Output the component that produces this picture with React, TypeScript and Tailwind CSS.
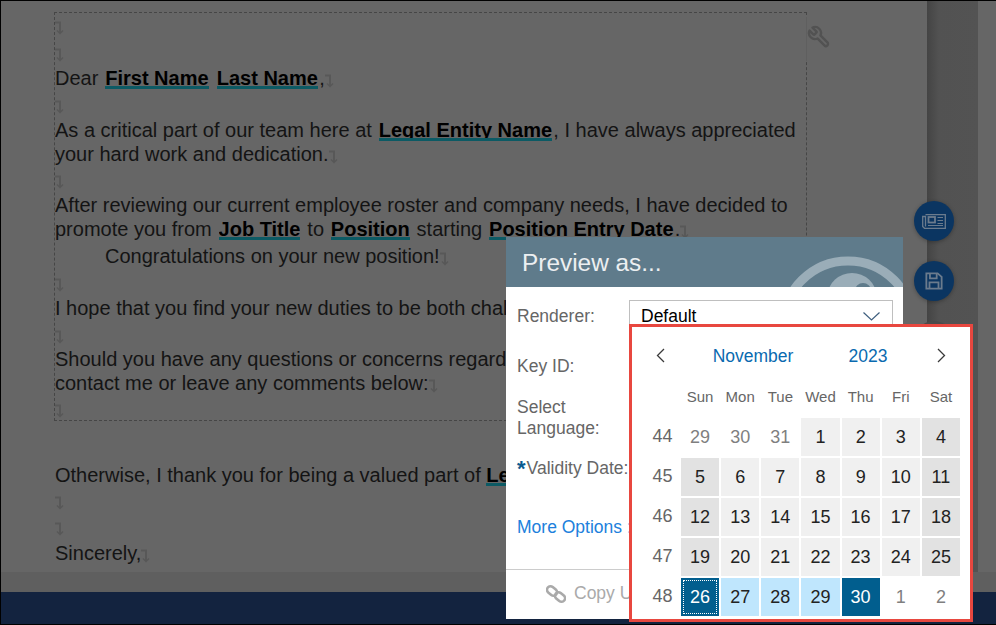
import React from "react";

const Arrow = () => (
  <svg width="9" height="14" viewBox="0 0 9 14" className="inline-block shrink-0 align-[-3px]" fill="none" stroke="#585858" strokeWidth="2">
    <path d="M0 1.5 H5 V12" />
    <path d="M2 9.5 L5 12.5 L8 9.5" strokeWidth="1.5" />
  </svg>
);

const Mark = ({ className }: { className: string }) => (
  <div className={"flex items-center " + className}>
    <Arrow />
  </div>
);

const F = ({ children }: { children: React.ReactNode }) => (
  <span className="mx-[1.3px] inline-block h-[23px] overflow-hidden border-b-[3px] border-[#0c5a64] align-top font-bold leading-[24px] text-black whitespace-nowrap">
    {children}
  </span>
);

const weeks: { n: number; days: [string, string][] }[] = [
  { n: 44, days: [["29", "o"], ["30", "o"], ["31", "o"], ["1", "d"], ["2", "d"], ["3", "d"], ["4", "w"]] },
  { n: 45, days: [["5", "w"], ["6", "d"], ["7", "d"], ["8", "d"], ["9", "d"], ["10", "d"], ["11", "w"]] },
  { n: 46, days: [["12", "w"], ["13", "d"], ["14", "d"], ["15", "d"], ["16", "d"], ["17", "d"], ["18", "w"]] },
  { n: 47, days: [["19", "w"], ["20", "d"], ["21", "d"], ["22", "d"], ["23", "d"], ["24", "d"], ["25", "w"]] },
  { n: 48, days: [["26", "s"], ["27", "r"], ["28", "r"], ["29", "r"], ["30", "e"], ["1", "o"], ["2", "o"]] },
];

const cellStyle: Record<string, string> = {
  o: "text-[#7f7f7f]",
  d: "bg-[#f0f0f0] text-[#222222]",
  w: "bg-[#e2e2e2] text-[#222222]",
  r: "bg-[#bfe6fd] text-[#222222]",
  e: "bg-[#015e8e] text-white",
  s: "bg-[#015e8e] text-white outline outline-1 outline-dotted outline-white outline-offset-[-3px]",
};

export default function App() {
  return (
    <div className="relative flex h-[625px] w-[996px] flex-col overflow-hidden border-t border-l border-black bg-[#666666] font-['Liberation_Sans',Arial,sans-serif] text-[20px] leading-6 text-[#141414]">
      <div className="flex h-[571px] shrink-0">
        <div className="relative w-[926px] shrink-0 pl-[53px] pt-[11px]">
          <div className="relative h-[409px] w-[753px] border border-dashed border-[#464646]">
            <span className="absolute right-[-1px] top-[4px] h-[44px] w-px bg-[#5f5f5f]" />
            <Mark className="h-[30px]" />
            <Mark className="h-[23px]" />
            <div className="h-6">
              Dear <F>First Name</F> <F>Last Name</F>,<Arrow />
            </div>
            <Mark className="h-[28px] pt-[6px]" />
            <div>
              As a critical part of our team here at <F>Legal Entity Name</F>, I have always appreciated your hard work and dedication.<Arrow />
            </div>
            <Mark className="h-[27px] pt-[5px]" />
            <div>
              After reviewing our current employee roster and company needs, I have decided to promote you from <F>Job Title</F> to <F>Position</F> starting <F>Position Entry Date</F>.<Arrow />
            </div>
            <div className="mt-[3px] pl-[50px]">Congratulations on your new position!<Arrow /></div>
            <Mark className="h-[28px] pt-[6px]" />
            <div className="whitespace-nowrap">I hope that you find your new duties to be both challenging and rewarding.</div>
            <Mark className="h-[27px] pt-[7px]" />
            <div>
              Should you have any questions or concerns regarding this change, please<br />
              contact me or leave any comments below:<Arrow />
            </div>
            <Mark className="h-[25px] pt-[7px]" />
            <div className="absolute left-[752px] top-[12px] -scale-x-100 text-[#525252]">
              <svg width="24" height="24" viewBox="0 0 24 24" fill="none" stroke="currentColor" strokeWidth="2.4" strokeLinejoin="round">
                <path d="M14.7 6.3a1 1 0 0 0 0 1.4l1.6 1.6a1 1 0 0 0 1.4 0l3.77-3.77a6 6 0 0 1-7.94 7.94l-6.91 6.91a2.12 2.12 0 0 1-3-3l6.91-6.91a6 6 0 0 1 7.94-7.94l-3.76 3.76z" />
              </svg>
            </div>
          </div>
          <div className="ml-px mt-[42px] whitespace-nowrap">
            Otherwise, I thank you for being a valued part of <span className="-ml-[1.3px] inline-block"><F>Legal Entity Name</F></span>.
          </div>
          <Mark className="ml-px h-[30px] pt-[2px]" />
          <Mark className="ml-px h-[24px]" />
          <div className="ml-px">Sincerely,<Arrow /></div>
        </div>
        <div className="w-[51px] shrink-0 bg-[linear-gradient(to_right,#444444,#525252_12px,#535353)]" />
        <div className="w-[18px] shrink-0" />
      </div>
      <div className="h-[20px] shrink-0 bg-[#5f5f5f]" />
      <div className="flex-1 border-b border-black bg-[#13233f]" />

      {/* floating action buttons */}
      <div className="absolute left-[913px] top-[200px] flex h-10 w-10 items-center justify-center rounded-full bg-[#0b3561] shadow-[0_1px_4px_rgba(0,0,0,0.3)]">
        <svg width="24" height="15" viewBox="0 0 24 15" fill="none" stroke="#6b7b8d" strokeWidth="1.3">
          <path d="M3.5 0.7 H23.3 V14.3 H2.5 L0.7 12.5 V2.5 H3.5 V12.5" />
          <rect x="6.5" y="3" width="6.5" height="5.5" strokeWidth="1.8" />
          <path d="M15.5 3.5 H21 M15.5 6.5 H21 M15.5 9.5 H21 M6 11.5 H21" strokeWidth="1.2" />
        </svg>
      </div>
      <div className="absolute left-[913px] top-[260px] flex h-10 w-10 items-center justify-center rounded-full bg-[#0b3561] shadow-[0_1px_4px_rgba(0,0,0,0.3)]">
        <svg width="18" height="18" viewBox="0 0 20 20" fill="none" stroke="#6b7b8d" strokeWidth="2">
          <path d="M1.5 1.5 H14 L18.5 5.5 V18.5 H1.5 Z" />
          <path d="M5.5 1.5 V7 H13 V1.5" />
          <path d="M5 18.5 V11.5 H15 V18.5" />
        </svg>
      </div>
      <div className="absolute left-[913px] top-[320px] h-10 w-10 rounded-full bg-[#4a4a4a]" />

      {/* Preview dialog */}
      <div className="absolute left-[505px] top-[236px] flex h-[382px] w-[397px] flex-col bg-white text-[17.5px] leading-[21px] text-[#666666]">
        <div className="relative h-[50px] shrink-0 overflow-hidden bg-[#5f7b8b] pl-4 pt-[12px] text-[24.4px] leading-[28px] text-[#eceff1]">
          Preview as...
          <svg className="absolute left-[270px] top-0" width="127" height="50" viewBox="0 0 127 50" fill="none">
            <circle cx="72" cy="89" r="65" stroke="#9aadb8" strokeWidth="9" />
            <ellipse cx="76" cy="58" rx="24" ry="22" fill="#9aadb8" />
            <circle cx="87" cy="54" r="8" fill="#5f7b8b" />
          </svg>
        </div>
        <div className="flex-1 pl-[11px] pt-[13px]">
          <div className="flex h-8 items-center">
            <div className="w-[112px]">Renderer:</div>
            <div className="flex h-8 w-[264px] items-center justify-between border border-[#bfbfbf] pl-[11px] pr-[12px] text-black">
              Default
              <svg width="17" height="9" viewBox="0 0 17 9" fill="none" stroke="#3f5f7f" strokeWidth="1.2">
                <path d="M0.5 0.5 L8.5 8 L16.5 0.5" />
              </svg>
            </div>
          </div>
          <div className="mt-[18px] flex h-8 items-center">Key ID:</div>
          <div className="mt-[15px] w-[100px]">Select Language:</div>
          <div className="mt-[13px] flex h-8 items-center">
            <span className="mr-px text-[22px] font-bold text-[#0a5a90]">*</span>Validity Date:
          </div>
          <div className="mt-[33px] whitespace-nowrap text-[#2080dc]">More Options :</div>
        </div>
        <div className="flex h-[50px] shrink-0 items-center gap-[8px] border-t border-[#cccccc] pb-[2px] pl-10 text-[#aaaaaa] whitespace-nowrap">
          <svg width="20" height="20" viewBox="0 0 20 20" fill="none" stroke="#aaaaaa" strokeWidth="2.6">
            <rect x="0.5" y="3.5" width="11" height="7" rx="3.5" transform="rotate(40 6 7)" />
            <rect x="8.5" y="9.5" width="11" height="7" rx="3.5" transform="rotate(40 14 13)" />
          </svg>
          Copy URL
        </div>
      </div>

      {/* Calendar popover */}
      <div className="absolute left-[628px] top-[323px] h-[298px] w-[344px] border-[3px] border-[#e8473f] bg-white text-[18px] text-black">
        <div className="flex h-[58px] items-center text-[17.5px]">
          <div className="flex w-[56px] justify-center pb-[2px]">
            <svg width="9" height="15" viewBox="0 0 9 15" fill="none" stroke="#3a3a3a" strokeWidth="1.3"><path d="M8 1 L1.5 7.5 L8 14" /></svg>
          </div>
          <div className="w-[130px] text-center text-[#0a6ab0]">November</div>
          <div className="w-[100px] text-center text-[#0a6ab0]">2023</div>
          <div className="flex w-[46px] justify-center pb-[2px]">
            <svg width="9" height="15" viewBox="0 0 9 15" fill="none" stroke="#3a3a3a" strokeWidth="1.3"><path d="M1 1 L7.5 7.5 L1 14" /></svg>
          </div>
        </div>
        <div className="mb-[9px] grid h-6 w-[328px] grid-cols-[47px_repeat(7,minmax(0,1fr))] items-center gap-x-[2px] text-center text-[15px] text-[#666666]">
          <div />
          {["Sun", "Mon", "Tue", "Wed", "Thu", "Fri", "Sat"].map((d) => (
            <div key={d}>{d}</div>
          ))}
        </div>
        <div className="grid w-[328px] grid-cols-[47px_repeat(7,minmax(0,1fr))] auto-rows-[38px] gap-[2px] text-center">
          {weeks.map((w) => (
            <React.Fragment key={w.n}>
              <div className="flex items-center justify-center pl-[14px] pb-[3px] text-[#666666]">{w.n}</div>
              {w.days.map(([d, k], i) => (
                <div key={i} className={"flex items-center justify-center " + cellStyle[k]}>{d}</div>
              ))}
            </React.Fragment>
          ))}
        </div>
      </div>
    </div>
  );
}
